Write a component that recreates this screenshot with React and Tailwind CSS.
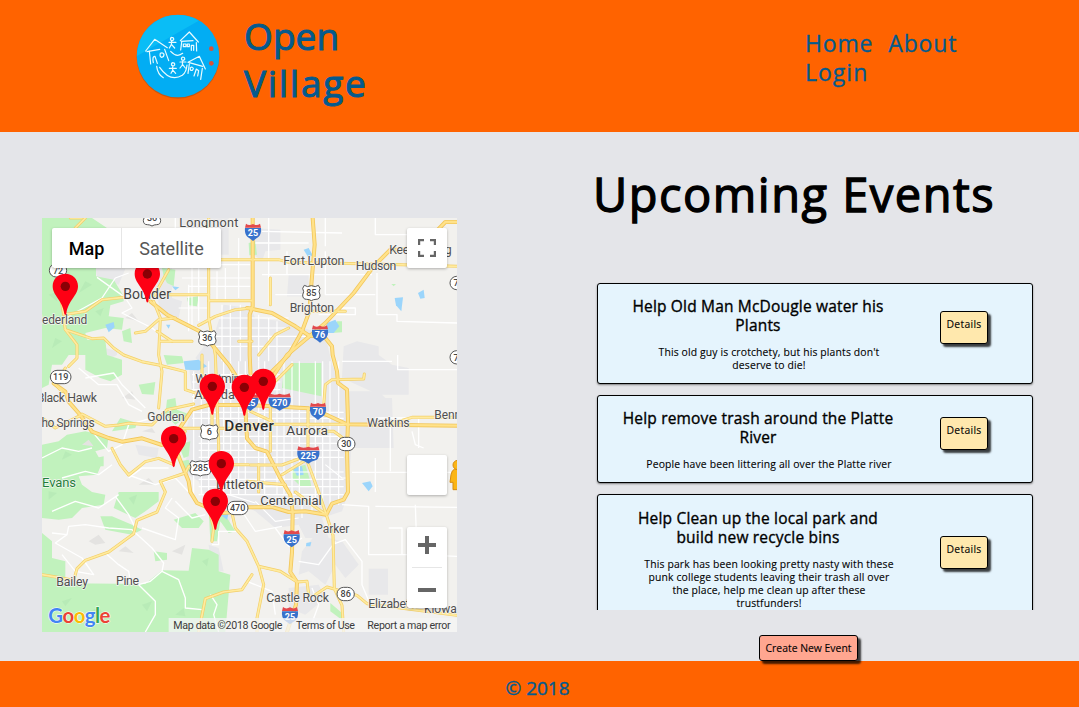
import React from "react";

const FOREST = [
  "0,0 150,0 195,30 190,150 162,150 162,175 215,185 245,235 245,250 205,262 200,295 245,300 240,335 190,330 130,345 135,365 190,365 195,411 240,425 240,470 205,490 175,480 130,455 130,411 80,411 60,440 30,440 20,500 0,510",
  "290,500 340,492 335,530 300,528",
  "365,411 420,415 425,435 375,440",
  "375,545 400,540 405,575 445,590 400,620 370,590",
  "0,680 50,670 75,650 130,640 200,655 195,690 160,700 180,735 165,770 110,775 120,800 150,822 190,830 185,860 120,870 90,900 50,905 0,900",
  "160,720 185,715 185,745 160,745",
  "235,600 285,615 280,630 210,640",
  "230,822 350,822 350,850 310,880 280,900 215,870",
  "175,895 210,895 270,920 300,935 270,950 190,935",
  "395,905 460,885 485,910 470,930 420,930",
  "0,945 30,970 30,1020 70,1030 70,1096 310,1098 360,1057 440,1058 450,990 500,995 530,1010 530,1060 565,1070 550,1242 0,1242",
  "335,1000 375,1005 375,1025 340,1030",
  "360,150 400,155 395,205 375,195 365,175",
  "240,340 265,330 270,375 245,370",
  "435,240 470,235 465,265 440,262",
  "500,870 540,875 580,940 560,945 535,910 525,970 505,970",
  "725,460 748,435 838,435 838,535 720,510",
  "750,750 790,740 805,790 808,808 775,805 750,780",
  "865,1155 900,1185 905,1210 865,1180",
  "885,310 900,310 900,343 870,345",
  "620,75 640,70 645,110 622,112",
  "1048,198 1062,198 1055,205",
  "410,680 445,670 440,715 425,720",
  "415,730 440,725 450,760 425,760",
];

const URBAN = [
  "300,150 390,150 390,240 420,250 410,300 360,290 345,240 300,220",
  "410,0 560,0 560,110 480,110 420,80",
  "625,30 715,35 715,95 670,100 660,130 635,110",
  "160,150 250,152 230,200 165,178",
  "545,260 625,270 640,300 720,310 850,350 870,440 740,440 670,480 560,470 480,440 460,420 520,340",
  "440,440 630,400 870,440 915,520 1010,520 1050,560 1020,600 1000,640 930,650 920,820 900,880 840,900 860,960 790,960 770,920 700,930 640,880 580,850 560,920 500,860 470,790 420,760 440,700 430,640 455,560",
  "905,385 945,370 1010,385 1010,411 1050,440 1100,450 1100,530 1010,530 900,480",
  "960,540 1050,540 1055,690 930,690 930,610",
  "820,950 900,970 950,1040 910,1080 880,1040 850,1100 800,1060 770,1070 780,1000",
  "980,1052 1038,1052 1038,1130 980,1130",
  "500,980 530,990 545,1060 525,1060 505,1020",
  "740,1110 830,1100 850,1140 790,1190 740,1170",
  "740,170 800,170 800,235 735,235",
  "190,390 225,400 225,411 185,430",
  "280,680 350,690 345,720 290,710",
];

const LAKES = [
  "785,95 800,90 812,112 800,120",
  "1058,240 1083,238 1078,280 1062,262",
  "1128,225 1145,215 1148,240 1135,242",
  "855,315 880,305 892,325 875,345 850,345",
  "425,430 470,425 495,445 470,457 430,455",
  "750,748 780,745 785,770 765,773",
  "960,795 985,790 992,805 980,820",
  "390,205 412,208 400,217",
  "372,320 385,320 380,332",
  "190,320 215,312 218,328 200,343",
  "540,875 560,885 555,905 535,890",
  "793,975 808,972 805,985 792,985",
];

const BACKROADS = [
  "M165,178L245,235M70,300L180,240L220,180L260,165M250,240L270,270L240,285L330,330L350,345",
  "M110,450L170,500L225,500L260,560L300,580M130,480L215,465L240,500L310,570M150,640L200,700L240,680L260,620L330,600",
  "M30,945L75,950L40,975L120,1020L155,1070L100,1060L60,1010M75,950L80,925L130,920L200,930L270,935L330,990L365,1035L360,1060L410,1085L430,1140L430,1170L480,1175",
  "M190,1005L230,1040L260,1060L265,1090M360,1060L325,1090L290,1100L340,1150L340,1190L310,1242",
  "M505,1130L525,1160L515,1190L530,1242M220,835L260,890L280,930M300,930L400,965L410,900L370,870L390,840",
  "M260,780L300,750L380,750M0,720L60,690L110,700L150,690M60,780L130,760L170,770L210,740M30,880L100,850L170,870L230,830",
  "M260,771L340,800L400,780L440,822M400,850L450,900L490,890M440,200L440,340M470,150L470,310",
  "M400,0L400,60M440,30L440,150M660,40L900,45M680,0L680,260M735,100L735,170M850,100L850,230L1000,230",
  "M640,75L800,75M660,170L990,170M700,230L800,230M890,270L940,270L940,290L830,290M1005,165L1005,290L1065,290L1065,310L1245,315",
  "M900,430L1050,430M1067,411L1067,455L1245,455M1000,600L1130,600L1130,690M1045,620L1045,760M930,763L1245,763",
  "M900,860L980,865L980,1010L1120,1010L1245,1015M1000,865L1245,868M1040,930L1080,930L1080,1010M1120,860L1125,1010",
  "M870,980L910,965L960,1030L960,1100L985,1160M770,1030L830,1040L880,970M700,930L740,985L780,960M800,1242L830,1160L810,1110",
  "M850,0L850,85M1000,0L1000,50L1130,50M1110,640L1120,680L1145,690",
  "M510,980L530,980L530,940L590,940M615,1090L690,1120L700,1190M1000,720L1000,822",
];

const HIGHWAYS = [
  "M632,0V265L623,290V411L627,500L610,570L615,661L640,690L675,701L715,781L745,831L752,882L750,1002L745,1062L765,1092L762,1160L735,1242",
  "M325,250L375,290L470,338L510,380L560,440L627,545",
  "M812,0L818,80L808,200L802,280L780,340L740,411L690,460",
  "M1245,12H1210L1140,85L1075,95L1045,95L995,145L935,225L850,315L735,411L690,480L640,550",
  "M615,270L690,285L760,325L800,352L850,360L870,385L872,411L885,460L888,495L915,515L918,610L915,700L918,822L905,845L870,857L853,890L790,880L740,882L690,867L615,868L580,882L540,885L500,870L465,855L445,822L440,790L420,740L400,690",
  "M35,496L70,521L80,551L115,591L150,641L200,660L240,671L300,661L360,681L400,650L450,575L500,561H625L800,571L855,591L915,619L1245,623",
];

const ARTERIALS = [
  "M120,588L190,625L230,621L260,616L330,621L375,575L455,558",
  "M625,619H915M1045,618L1110,598H1245M420,631H630M430,640L390,690",
  "M845,561L850,500L870,485L965,483L967,468",
  "M798,571V722L720,770M835,640L875,640L910,665",
  "M537,125H710L740,133L995,138L1245,145M370,230H500M500,248H630M355,370H450M590,370H630",
  "M500,0V300L520,411L530,680V822M470,322L520,295L580,275L630,270M335,250L355,300L350,411L360,460L350,570",
  "M280,345L310,340L350,305L400,300M345,340L390,370M380,155L335,235",
  "M130,0L100,30M245,238L180,245L130,280L65,290L55,230M65,300L70,335L150,362L185,360L215,390L245,411L300,431L350,441L430,461V515L520,545",
  "M70,335L105,380L105,420L80,445M70,450L40,500L60,520M0,600L40,630L120,590",
  "M210,691L235,740L260,771L310,731L350,721L395,740L400,700",
  "M0,1070L30,1075L95,1087L105,1052L130,1027L200,1002L275,947L285,907L345,882L370,822L355,790L430,765L440,745L560,740H620",
  "M615,970L650,1045L665,1100L645,1200V1242M650,1045L715,1060L765,1092L795,1090L800,1130M570,885L580,930L615,970",
  "M630,1070L600,1115L545,1122L490,1142L480,1192L470,1242M505,890L515,930L510,970",
  "M830,822L853,890L873,952L877,1112L900,1162L905,1242M820,1130L855,1107L945,1132L975,1157L1245,1192",
  "M790,280H910M685,180V260M625,741H720L790,715L830,822M685,561V700M480,411L480,540M510,560V640",
  "M625,580L690,610M750,440L690,500M650,411L700,350L740,330M615,790L730,800M650,740V822M120,0L85,0",
  "M760,822L810,860L853,890",
];

const gridX = [455, 478, 500, 545, 566, 590, 610, 650, 668, 705, 726, 750, 772, 820, 842, 864, 890];
const gridY = [470, 492, 515, 536, 583, 601, 655, 676, 697, 718, 762, 784, 806, 830];

const PINS = [
  [316, 130], [70, 167], [664, 452], [511, 467], [607, 470], [395, 624], [538, 699], [520, 812],
];

const LABELS = [
  ["Longmont", 412, 26, 177, 38, "#4c4c4c"],
  ["Fort Lupton", 724, 141, 183, 37, "#505050"],
  ["Hudson", 941, 156, 122, 37, "#505050"],
  ["Keenesburg", 1042, 108, 187, 37, "#505050"],
  ["Brighton", 743, 282, 133, 37, "#505050"],
  ["Boulder", 244, 243, 143, 42, "#444"],
  ["Nederland", -25, 318, 161, 36, "#505050"],
  ["Black Hawk", -16, 552, 181, 37, "#505050"],
  ["Idaho Springs", -48, 628, 206, 36, "#505050"],
  ["Golden", 316, 609, 112, 36, "#505050"],
  ["Westminster", 460, 494, 192, 38, "#505050"],
  ["Arvada", 457, 544, 122, 38, "#505050"],
  ["Aurora", 733, 651, 125, 41, "#444"],
  ["Watkins", 975, 627, 128, 37, "#505050"],
  ["Bennett", 1177, 604, 122, 36, "#505050"],
  ["Littleton", 522, 813, 143, 39, "#444"],
  ["Centennial", 655, 860, 184, 39, "#444"],
  ["Parker", 820, 946, 102, 36, "#505050"],
  ["Castle Rock", 673, 1152, 188, 37, "#505050"],
  ["Elizabeth", 979, 1171, 144, 37, "#505050"],
  ["Kiowa", 1146, 1185, 98, 36, "#505050"],
  ["Bailey", 43, 1105, 95, 37, "#505050"],
  ["Pine", 222, 1101, 69, 37, "#505050"],
  ["Evans", 0, 806, 102, 39, "#1f7f3a"],
];

function RoadShield({ x, y, n, round }) {
  const w = n.length > 2 ? 31 : 26;
  return (
    <g transform={`translate(${x} ${y})`}>
      {round ? (
        <rect x={-w} y="-20" width={w * 2} height="40" rx="20" fill="#fff" stroke="#555" strokeWidth="3" />
      ) : (
        <path
          d={`M${-w + 5},-22Q${-w / 2},-15 0,-21Q${w / 2},-15 ${w - 5},-22L${w},-13Q${w - 6},-3 ${w},7Q${w},20 ${w - 12},20Q6,20 0,24Q-6,20 ${12 - w},20Q${-w},20 ${-w},7Q${6 - w},-3 ${-w},-13Z`}
          fill="#fff" stroke="#555" strokeWidth="3"
        />
      )}
      <text y="10" textAnchor="middle" fontSize="27" fontWeight="500" fill="#444">{n}</text>
    </g>
  );
}

function Interstate({ x, y, n }) {
  const w = n.length > 2 ? 33 : 24;
  return (
    <g transform={`translate(${x} ${y})`}>
      <path d={`M${-w},-10Q${-w - 2},10 ${-w + 9},18Q-9,22 0,29Q9,22 ${w - 9},18Q${w + 2},10 ${w},-10Z`} fill="#3872cc" />
      <path d={`M${-w},-11L${-w + 3},-23Q${-w / 2},-15 0,-22Q${w / 2},-15 ${w - 3},-23L${w},-11Z`} fill="#e2494d" />
      <text y="15" textAnchor="middle" fontSize="27" fontWeight="700" fill="#fff">{n}</text>
    </g>
  );
}

function RoadMap() {
  return (
    <svg viewBox="0 0 1245 1242" className="block h-[414px] w-[415px]" fontFamily="Roboto, sans-serif">
      <rect width="1245" height="1242" fill="#f2f1ee" />
      <g fill="#e8e8ea">{URBAN.map((p) => <polygon key={p} points={p} />)}</g>
      <g fill="#c1f2bd">{FOREST.map((p) => <polygon key={p} points={p} />)}</g>
      <g fill="#b1e5b2" opacity=".55">
        <path d="M60,150l25,15-30,20zM130,190l20,10-40,25zM20,230l30-10-5,30zM160,280l25-10-10,25zM40,360l20,10-30,20zM70,700l20,10-30,15zM20,820l25,5-25,20zM140,1180l30-10 20,20-35,10zM300,1160l30-10-15,30zM400,1190l25-20 5,25zM60,1150l30-10-20,25zM480,1030l20-10-5,25zM260,840l25-10-10,30z" />
      </g>
      <g fill="#e4e3e1"><path d="M140,970l30-20 20,25-30,5zM230,1000l20-15 25,20zM390,1000l40-20-10,30zM290,800l30-20 20,20zM250,300l20-15 20,25zM240,540l30-20 10,25zM120,680l20-15 15,20zM300,640l30-10 10,15z" /></g>
      <g fill="#9bd5fb">{LAKES.map((p) => <polygon key={p} points={p} />)}</g>
      <g fill="none" stroke="#fff" strokeLinejoin="round">
        <g strokeWidth="4">{BACKROADS.map((d) => <path key={d} d={d} />)}</g>
        <g strokeWidth="3.5">
          {gridX.map((x) => <path key={x} d={`M${x},${x < 500 ? 460 : 430}V${x > 740 ? 860 : 830}`} />)}
          {gridY.map((y) => <path key={y} d={`M${y > 640 ? 470 : 450},${y}H${y < 560 ? 715 : 905}`} />)}
          <path d="M420,140H625M420,180H625M410,270H500M440,205H625M530,300H740M530,330H740M520,355H800M520,385H760M540,260V430M565,260V430M595,260V430M650,290V430M680,300V430M705,310V430M450,150V330M590,60V240M550,150V250M525,160V250M850,740L900,780H920M640,850L700,910L770,900M600,880L640,940L720,925M780,840V900M810,830V880M560,830L640,855M700,840H830" />
        </g>
      </g>
      <g fill="none" strokeLinejoin="round" strokeLinecap="round">
        <g stroke="#f3cf69" strokeWidth="9">{ARTERIALS.map((d) => <path key={d} d={d} />)}</g>
        <g stroke="#f2c75c" strokeWidth="12">{HIGHWAYS.map((d) => <path key={d} d={d} />)}</g>
        <g stroke="#ffeb9f" strokeWidth="5">{ARTERIALS.map((d) => <path key={d} d={d} />)}</g>
        <g stroke="#ffe28a" strokeWidth="7">{HIGHWAYS.map((d) => <path key={d} d={d} />)}</g>
      </g>
      <g stroke="#f6f5f3" strokeWidth="4" strokeLinejoin="round" paintOrder="stroke">
        {LABELS.map(([t, x, y, w, s, c]) => (
          <text key={t} x={x} y={y} textLength={w} fontSize={s} fill={c}>{t}</text>
        ))}
        <text x="547" y="638" textLength="149" fontSize="46" fontWeight="500" fill="#2c2c2c">Denver</text>
      </g>
      <RoadShield x={330} y={0} n="36" />
      <RoadShield x={48} y={157} n="72" round />
      <RoadShield x={496} y={360} n="36" />
      <RoadShield x={808} y={224} n="85" />
      <RoadShield x={56} y={477} n="119" round />
      <RoadShield x={502} y={642} n="6" />
      <RoadShield x={475} y={750} n="285" />
      <RoadShield x={587} y={870} n="470" round />
      <RoadShield x={913} y={678} n="30" round />
      <RoadShield x={911} y={1128} n="86" round />
      <RoadShield x={1250} y={195} n="79" round />
      <RoadShield x={1250} y={418} n="79" round />
      <Interstate x={633} y={40} n="25" />
      <Interstate x={834} y={345} n="76" />
      <Interstate x={625} y={550} n="25" />
      <Interstate x={713} y={549} n="270" />
      <Interstate x={828} y={577} n="70" />
      <Interstate x={799} y={708} n="225" />
      <Interstate x={749} y={959} n="25" />
      <Interstate x={744} y={1190} n="25" />
      {PINS.map(([x, y]) => (
        <g key={`${x}-${y}`} transform={`translate(${x} ${y})`}>
          <path d="M0,0C21,0 38,16 38,37C38,67 9,77 3,120Q0,127 -3,120C-9,77 -38,67 -38,37C-38,16 -21,0 0,0Z" fill="#fe0014" />
          <circle cy="38" r="14" fill="#8a0005" />
        </g>
      ))}
      <g fill="#fbb514" stroke="#d58b12" strokeWidth="3">
        <path d="M1238,753Q1229,757 1227,770L1224,793H1233V815H1250V753Z" />
        <circle cx="1247" cy="741" r="14" />
      </g>
      <rect x="380" y="1200" width="865" height="42" fill="#f5f5f5" opacity=".78" />
      <g fontSize="32" fill="#3c3c3c">
        <text x="394" y="1233" textLength="327">Map data ©2018 Google</text>
        <text x="762" y="1233" textLength="177">Terms of Use</text>
        <text x="976" y="1233" textLength="250">Report a map error</text>
      </g>
      <text x="19" y="1216" textLength="186" fontSize="61" fontFamily="Lato, sans-serif" fontWeight="700" stroke="#fff" strokeWidth="3" paintOrder="stroke">
        <tspan fill="#4285f4">G</tspan><tspan fill="#ea4335">o</tspan><tspan fill="#fbbc05">o</tspan><tspan fill="#4285f4">g</tspan><tspan fill="#34a853">l</tspan><tspan fill="#ea4335">e</tspan>
      </text>
    </svg>
  );
}

const control = "absolute rounded-[2px] bg-white shadow-[0_1px_3px_rgba(0,0,0,0.28)]";

function MapPanel() {
  return (
    <div className="relative h-[414px] w-[415px] shrink-0 overflow-hidden">
      <RoadMap />
      <div className={`${control} left-[10px] top-[10px] flex h-10 w-[169px] items-center font-[Roboto,sans-serif] text-[18px]`}>
        <div className="flex h-full w-[70px] items-center justify-center border-r border-[#e6e6e6] font-medium text-black">Map</div>
        <div className="flex-1 text-center text-[#565656]">Satellite</div>
      </div>
      <div className={`${control} left-[365px] top-[10px] flex h-10 w-10 items-center justify-center`}>
        <svg viewBox="0 0 18 18" className="size-[18px]" fill="none" stroke="#666" strokeWidth="2.2">
          <path d="M1.1,6V1.1H6M12,1.1h4.9V6M16.9,12v4.9H12M6,16.9H1.1V12" />
        </svg>
      </div>
      <div className={`${control} left-[365px] top-[237px] size-10`} />
      <div className={`${control} left-[365px] top-[309px] flex h-[81px] w-10 flex-col items-center`}>
        <svg viewBox="0 0 40 40" className="h-10 w-10" stroke="#666" strokeWidth="4"><path d="M11,18H29M20,9V27" /></svg>
        <div className="h-px w-[30px] bg-[#e6e6e6]" />
        <svg viewBox="0 0 40 40" className="h-10 w-10" stroke="#666" strokeWidth="4"><path d="M11,22H29" /></svg>
      </div>
    </div>
  );
}

function Logo() {
  return (
    <svg viewBox="39 36 270 270" className="h-[90px] w-[90px]">
      <ellipse cx="174" cy="172" rx="124" ry="124" fill="#9b4a1c" opacity=".5" />
      <circle cx="174" cy="168" r="124" fill="#02adf3" />
      <path d="M51,168A123,123 0 0 1 236,62Z" fill="#0abdf6" />
      <g fill="none" stroke="#e9fbff" strokeWidth="3.6" strokeLinecap="round" strokeLinejoin="round">
        <path d="M77,153L104,118L142,143M88,153L92,192M81,155L119,148M134,148L146,182M100,188Q96,168 105,169L112,190M121,160q7-4 11,3q0,9-7,9q-7-2-4-12" />
        <path d="M181,122L208,96L235,126M185,127L182,150M184,124L219,122M229,128L230,153M190,132h8v8h-8zM202,132h6v8h-6zM214,151V136H221V151" />
        <path d="M204,187L238,169L256,207M205,187L248,199M208,192L204,220M211,203q7-4 9,3q-2,8-9,4zM222,228L229,207L236,212L233,228M247,205L242,238" />
        <path d="M155,112q7,0 6,7q-4,5-9,1q-2-6 3-8M155,123L154,134M147,127H168M154,134L148,144M155,134L164,144" />
        <path d="M188,171q7,0 6,7q-4,5-9,1q-2-6 3-8M188,183L187,195M180,186H198M187,195L180,204M188,194L196,204" />
        <path d="M158,188q7,0 6,7q-4,5-9,1q-2-6 3-8M158,200V211M148,205H169M158,211L153,220M159,211L167,220" />
        <path d="M152,154Q170,174 188,160M110,199Q113,223 130,233M119,202Q151,248 187,226Q199,217 201,195" />
      </g>
      <circle cx="274" cy="146" r="7" fill="#d85238" /><circle cx="274" cy="190" r="7" fill="#d85238" />
    </svg>
  );
}

const events = [
  {
    title: ["Help Old Man McDougle water his", "Plants"],
    body: ["This old guy is crotchety, but his plants don't", "deserve to die!"],
    card: "h-[101px]", pad: "pt-[13px]", button: "mt-[27px]",
  },
  {
    title: ["Help remove trash around the Platte", "River"],
    body: ["People have been littering all over the Platte river"],
    card: "h-[88px]", pad: "pt-[13px]", button: "mt-[21px]",
  },
  {
    title: ["Help Clean up the local park and", "build new recycle bins"],
    body: ["This park has been looking pretty nasty with these", "punk college students leaving their trash all over", "the place, help me clean up after these", "trustfunders!"],
    card: "h-[130px]", pad: "pt-[14px]", button: "mt-[41px]",
  },
];

const raised = "rounded-[3px] border border-black text-[10.4px] leading-[13px] [-webkit-text-stroke:0.1px] shadow-[3px_3px_2px_rgba(0,0,0,0.75)]";

function EventCard({ event }) {
  return (
    <article className={`flex w-[436px] shrink-0 rounded-[3px] border border-black bg-[#e5f4fd] shadow-[0_1px_2px_rgba(0,0,0,0.45)] ${event.card}`}>
      <div className={`w-[320px] text-center ${event.pad}`}>
        <h2 className="whitespace-nowrap text-[15.5px] leading-[19px] tracking-[0.18px] [-webkit-text-stroke:0.35px]">
          {event.title.map((line) => <span key={line} className="block">{line}</span>)}
        </h2>
        <p className="ml-[22px] mt-[11px] whitespace-nowrap text-[10.4px] leading-[13px] tracking-[0.14px] [-webkit-text-stroke:0.1px]">
          {event.body.map((line) => <span key={line} className="block">{line}</span>)}
        </p>
      </div>
      <button className={`ml-[22px] flex h-[33px] w-12 justify-center bg-[#ffe8ad] pt-[6px] tracking-[0.3px] ${raised} ${event.button}`}>
        Details
      </button>
    </article>
  );
}

export default function App() {
  return (
    <div className="flex h-[707px] w-[1079px] flex-col overflow-hidden bg-[#e4e5e9] font-['Open_Sans',sans-serif] text-black">
      <header className="flex h-[132px] shrink-0 justify-between bg-[#ff6300] text-[#045a8d]">
        <div className="flex pl-[133px] pt-3">
          <Logo />
          <h1 className="ml-[21px] text-[37px] leading-[47px] [-webkit-text-stroke:1px]">
            <span className="block tracking-[0.1px]">Open</span>
            <span className="block tracking-[1.7px]">Village</span>
          </h1>
        </div>
        <nav className="flex w-[274px] flex-wrap content-start gap-x-[15px] pr-[105px] pt-[29px] text-[23px] leading-[29px] [-webkit-text-stroke:0.3px]">
          <a className="tracking-[0.8px]">Home</a>
          <a className="tracking-[0.9px]">About</a>
          <a className="tracking-[1px]">Login</a>
        </nav>
      </header>
      <main className="flex h-[529px] shrink-0 justify-between pl-[42px] pr-[46px]">
        <div className="pt-[86px]"><MapPanel /></div>
        <section className="flex w-[436px] flex-col">
          <h1 className="ml-[-4px] mt-8 h-[60px] whitespace-nowrap text-[47px] leading-[60px] tracking-[1.5px] [-webkit-text-stroke:1.3px]">Upcoming Events</h1>
          <div className="-mx-2 mt-[57px] flex h-[329px] flex-col gap-[11px] overflow-hidden px-2 pt-[2px]">
            {events.map((event) => <EventCard key={event.title[0]} event={event} />)}
          </div>
          <button className={`relative ml-[162px] mt-[25px] h-[26px] w-[99px] shrink-0 whitespace-nowrap bg-[#ffa690] ${raised}`}>
            Create New Event
          </button>
        </section>
      </main>
      <footer className="flex h-[46px] shrink-0 items-center justify-center bg-[#ff6300] pr-1 pt-[8px] text-[19px] text-[#045a8d] [-webkit-text-stroke:0.4px]">
        © 2018
      </footer>
    </div>
  );
}
